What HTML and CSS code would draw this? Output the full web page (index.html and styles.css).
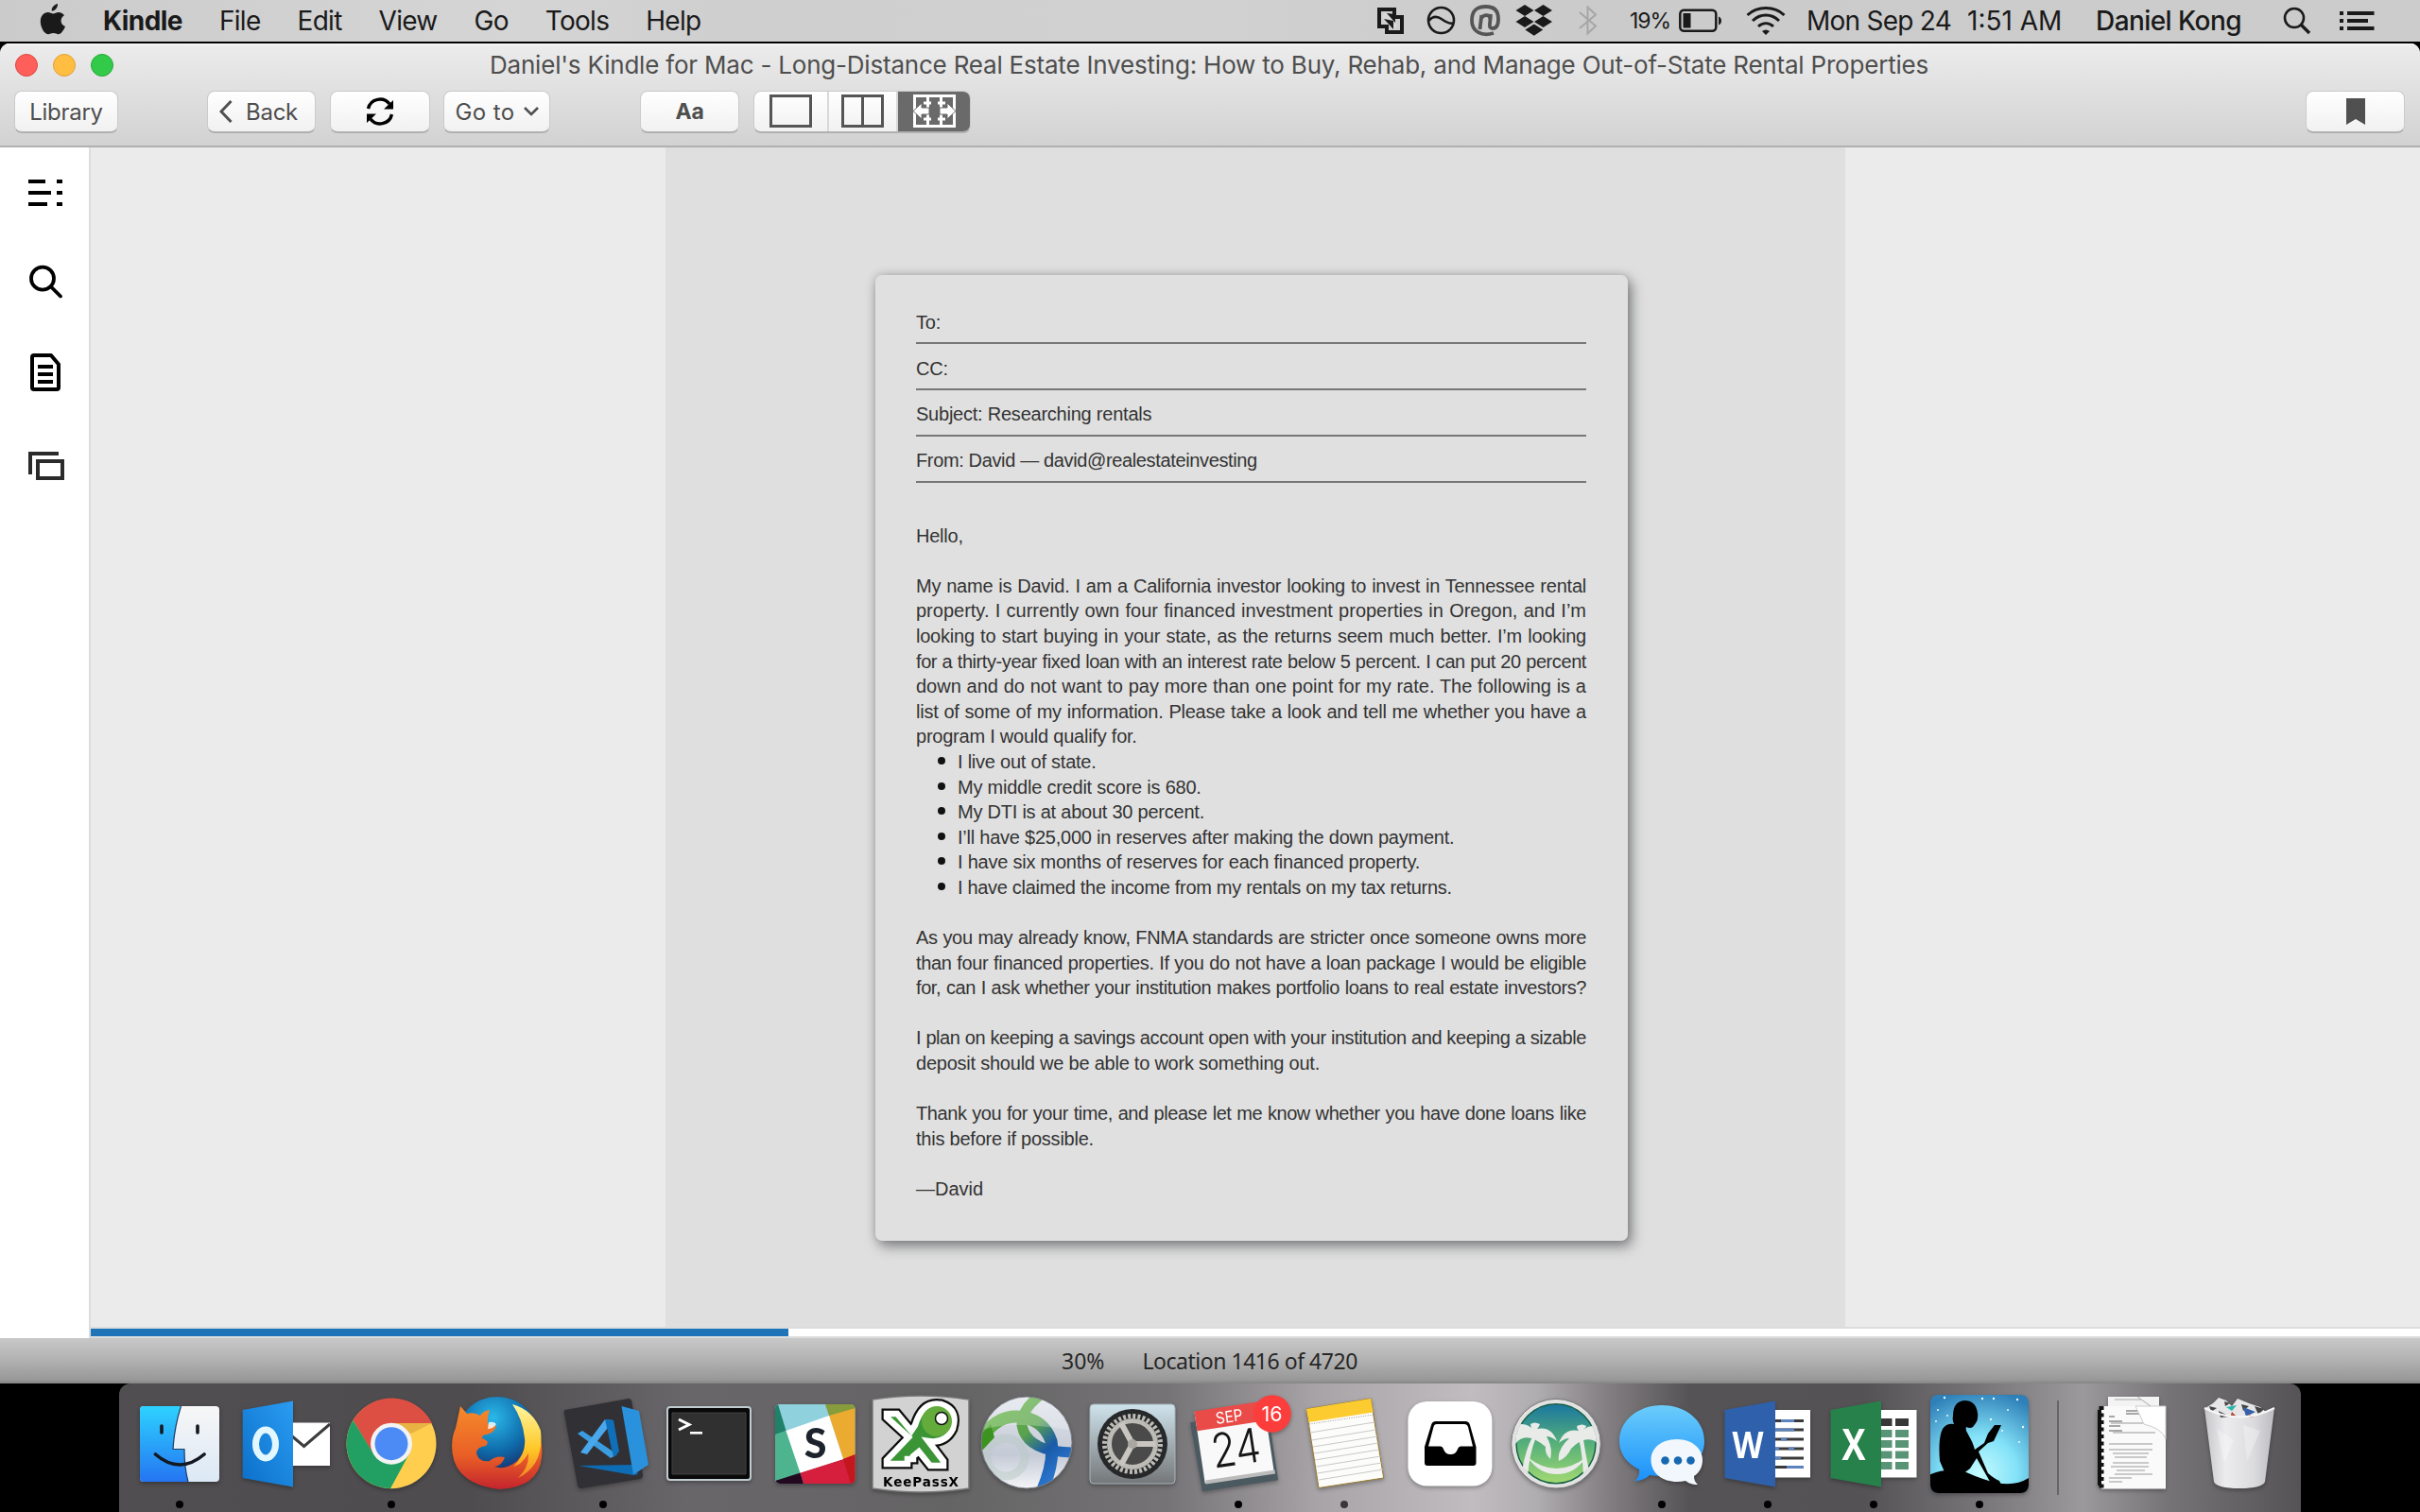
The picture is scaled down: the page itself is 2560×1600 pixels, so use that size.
FILE: index.html
```html
<!DOCTYPE html>
<html lang="en">
<head>
<meta charset="utf-8">
<title>Kindle</title>
<link rel="stylesheet" href="styles.css">
</head>
<body>
<header class="menubar">
  <svg class="apple" width="28" height="34" viewBox="0 0 28 34"><path d="M19 0c.4 3.600-2.600 7.600-6.300 7.600C12.200 4 15.600.500 19 0zM20 9c2.600 0 4.800 1.300 6 3.300-5 3-4.300 9.700 1 11.800-1.500 4-4.400 8.200-7.200 8.200-2 0-2.800-1.200-5.300-1.200s-3.500 1.200-5.300 1.200C5 32.300.800 25 .800 18.700.800 12.500 4.700 9 8.600 9c2.400 0 4.200 1.500 5.700 1.500S17.500 9 20 9z"/></svg>
  <nav class="menus">
    <b>Kindle</b><span>File</span><span>Edit</span><span>View</span><span>Go</span><span>Tools</span><span>Help</span>
  </nav>
  <div class="status">
    <svg class="s-tray" width="32" height="32" viewBox="0 0 32 32"><g fill="none" stroke="#1a1a1a" stroke-width="4"><path d="M20 12V4H4v18h8"/><path d="M12 20v8h16V12h-8"/></g><path d="M10 7l13 14-4 5L7 12z" fill="#d8d8d8"/><path d="M9 14l10 11v-9zM12 8l9 10V9z"/></svg>
    <svg class="s-circle" width="32" height="32" viewBox="0 0 32 32" fill="none" stroke="#1a1a1a" stroke-width="2.600"><circle cx="15.500" cy="15.500" r="13.500"/><path d="M2.500 16c4-5 9-5 14-1.500s8 5 12 4"/></svg>
    <svg class="s-at" width="32" height="34" viewBox="0 0 32 34" fill="none" stroke="#555" stroke-width="3.800"><path d="M25 30c-13 4-23-2-23-13S7 2 17 2s13 6 13 13c0 6-2 10-6 10s-3-3-3-5l1-10"/><path d="M10.500 26l1.800-15M12 14c3-4 9-4 9.500 1"/></svg>
    <svg class="s-drop" width="40" height="34" viewBox="0 0 40 34"><path d="M10 0l9.500 6L10 12 .500 6zM29.500 0L39 6l-9.500 6L20 6zM10 12l9.500 6-9.500 6-9.500-6zM29.500 12l9.500 6-9.500 6-9.500-6zM19.800 20.500l9.400 6-9.400 6.300-9.400-6.300z"/></svg>
    <svg class="s-bt" width="22" height="32" viewBox="0 0 22 32" fill="none" stroke="#a6a6a6" stroke-width="2"><path d="M2 7l17 14.500-8.500 8V1.500l8.500 8L2 24"/></svg>
    <span class="pct">19%</span>
    <svg class="s-bat" width="46" height="26" viewBox="0 0 46 26"><rect x="1.300" y="1.800" width="38" height="22" rx="4" fill="none" stroke="#1a1a1a" stroke-width="2.500"/><rect x="4.500" y="5" width="8" height="15.500"/><path d="M42 8.500c4 1 4 8 0 9z"/></svg>
    <svg class="s-wifi" width="42" height="30" viewBox="0 0 42 30" fill="none" stroke="#1a1a1a" stroke-width="3"><path d="M1.500 9C12-1 30-1 40.500 9M7 15c8-8 20-8 28 0M13 21c5-4.500 11-4.500 16 0"/><path d="M17 26q4-3 8 0l-4 4z" fill="#1a1a1a" stroke="none"/></svg>
    <span class="date">Mon Sep 24</span><span class="time">1:51 AM</span>
    <span class="user">Daniel Kong</span>
    <svg class="s-find" width="30" height="30" viewBox="0 0 30 30" fill="none" stroke="#1a1a1a" stroke-width="2.600"><circle cx="12" cy="12" r="10"/><path d="M19 19l9 9" stroke-width="3.400"/></svg>
    <svg class="s-list" width="37" height="20" viewBox="0 0 37 20"><path d="M0 0h4v4H0zM8 0h28.500v4H8zM0 8h4v4H0zM8 8h22v4H8zM0 16h4v4H0zM8 16h28.500v4H8z"/></svg>
  </div>
</header>

<main class="window">
  <header class="chrome">
    <div class="titlebar"><div class="lights"><i class="red"></i><i class="yellow"></i><i class="green"></i></div><h1>Daniel's Kindle for Mac - Long-Distance Real Estate Investing: How to Buy, Rehab, and Manage Out-of-State Rental Properties</h1></div>
    <div class="toolbar">
      <button class="btn library">Library</button>
      <button class="btn back"><svg width="14" height="24" viewBox="0 0 14 24" fill="none" stroke="#505050" stroke-width="3"><path d="M12.500 1L2 12l10.500 11"/></svg><span>Back</span></button>
      <button class="btn sync"><svg width="30" height="30" viewBox="0 0 30 30"><g fill="none" stroke="#000" stroke-width="3.400"><path d="M2.500 12C5 1 19-1 25 7M27.500 18C25 29 11 31 5 23"/></g><path d="M29 3v9.500H19zM1 27v-9.500h10z"/></svg></button>
      <button class="btn goto"><span>Go to</span><svg width="16" height="10" viewBox="0 0 16 10" fill="none" stroke="#505050" stroke-width="2.600"><path d="M1 1l7 7 7-7"/></svg></button>
      <button class="btn aa"><b>Aa</b></button>
      <div class="seg">
        <button class="one"><svg width="45" height="36" viewBox="0 0 45 36" fill="none" stroke="#555" stroke-width="3"><path d="M1.500 1.500h42v32h-42z"/></svg></button>
        <button class="two"><svg width="45" height="36" viewBox="0 0 45 36" fill="none" stroke="#555" stroke-width="3"><path d="M1.500 1.500h42v32h-42zM22.500 1.500v32"/></svg></button>
        <button class="three"><svg width="45" height="36" viewBox="0 0 45 36"><path d="M1.500 1.500h42v32h-42zM15.500 1.500v32M29.500 1.500v32M11 9h8M26 9h8M11 26h8M26 26h8" fill="none" stroke="#fff" stroke-width="3"/><path d="M0 17.500L9 9v5h8v7H9v5zM45 17.500L36 9v5h-8v7h8v5z" fill="#fff" stroke="#6a6a6a"/></svg></button>
      </div>
      <button class="btn mark"><svg width="20" height="28" viewBox="0 0 20 28"><path d="M0 0h20v28l-10-6-10 6z" fill="#505050"/></svg></button>
    </div>
  </header>

  <div class="body">
    <aside class="side">
      <svg width="40" height="28" viewBox="0 0 40 28"><path d="M0 0h18v4H0zM30 0h6v4h-6zM0 12h24v4H0zM30 12h6v4h-6zM0 24h20v4H0zM30 24h6v4h-6z"/></svg>
      <svg width="40" height="36" viewBox="0 0 40 36" fill="none" stroke="#000" stroke-width="3.800"><circle cx="15" cy="14.700" r="12"/><path d="M24 23.500l10 10" stroke-linecap="round"/></svg>
      <svg width="40" height="40" viewBox="0 0 40 40" fill="none" stroke="#000" stroke-width="4"><path d="M6 2h18l8 9.500V36q0 2-2 2H6q-2 0-2-2V4q0-2 2-2z" stroke-linejoin="round"/><path d="M10 14h16M10 22h16M10 30h16"/></svg>
      <svg width="40" height="30" viewBox="0 0 40 30" fill="none" stroke="#2b2b2b" stroke-width="4"><path d="M2 24V2h30M10 10h26v18H10z"/></svg>
    </aside>
    <section class="reader">
      <div class="spread"><div class="page"><article class="letter">
        <div class="row">To:</div>
        <div class="row">CC:</div>
        <div class="row">Subject: Researching rentals</div>
        <div class="row tight">From: David — david@realestateinvesting</div>
        <p class="hello">Hello,</p>
        <p class="full"><span>My name is David. I am a California investor looking to invest in Tennessee rental</span><span class="loose">property. I currently own four financed investment properties in Oregon, and I’m</span><span>looking to start buying in your state, as the returns seem much better. I’m looking</span><span class="tight">for a thirty-year fixed loan with an interest rate below 5 percent. I can put 20 percent</span><span class="loose">down and do not want to pay more than one point for my rate. The following is a</span><span>list of some of my information. Please take a look and tell me whether you have a</span></p>
        <p>program I would qualify for.</p>
        <ul>
          <li>I live out of state.</li>
          <li>My middle credit score is 680.</li>
          <li>My DTI is at about 30 percent.</li>
          <li>I’ll have $25,000 in reserves after making the down payment.</li>
          <li>I have six months of reserves for each financed property.</li>
          <li class="snug">I have claimed the income from my rentals on my tax returns.</li>
        </ul>
        <p class="full"><span class="snug">As you may already know, FNMA standards are stricter once someone owns more</span><span class="snug">than four financed properties. If you do not have a loan package I would be eligible</span><span class="tight">for, can I ask whether your institution makes portfolio loans to real estate investors?</span></p>
        <p class="full gap"><span class="tight">I plan on keeping a savings account open with your institution and keeping a sizable</span></p>
        <p>deposit should we be able to work something out.</p>
        <p class="full gap"><span class="tight">Thank you for your time, and please let me know whether you have done loans like</span></p>
        <p>this before if possible.</p>
        <p class="gap sign">—David</p>
      </article></div></div>
      <div class="progress"><div style="width:29.950%"></div></div>
    </section>
  </div>
  <footer class="foot"><span>30%</span><span class="loc">Location 1416 of 4720</span></footer>
</main>

<footer class="desktop"><div class="dock">
  <div class="app run"><svg viewBox="0 0 112 112"><defs><linearGradient id="fb" x2="0" y2="1"><stop stop-color="#2ed2ff"/><stop offset="1" stop-color="#2475f2"/></linearGradient><linearGradient id="fw" x2="0" y2="1"><stop stop-color="#f7f7f7"/><stop offset="1" stop-color="#dbe8f5"/></linearGradient></defs><rect x="14" y="16" width="84" height="80" rx="4" fill="url(#fw)"/><path d="M18 16h39.500C53 30 50 45 49 61.500h12c0 12 1 23 4 34.500H18q-4 0-4-4V20q0-4 4-4z" fill="url(#fb)"/><path d="M57.500 16C53 30 50 45 49 61.500h12c0 12 1 23 4 34.500" fill="none" stroke="#1c3e66" stroke-width="1.200"/><path d="M37 37v7M75 37v7M30.500 67q25.500 22 51.500 0" fill="none" stroke="#141820" stroke-width="3.600" stroke-linecap="round"/></svg></div>
  <div class="app"><svg viewBox="0 0 112 112"><defs><linearGradient id="ol" x1="0" y1="1" x2="1" y2="0"><stop stop-color="#0b6fc9"/><stop offset="1" stop-color="#2a9cf3"/></linearGradient></defs><path d="M62 33.500h41V79H62z" fill="#fff"/><path d="M62 47l13.600 11.500L103 35" fill="none" stroke="#3c3c3c" stroke-width="3"/><path d="M10.700 20L64 10.500v91L10.700 92z" fill="url(#ol)"/><ellipse cx="35" cy="56" rx="10.500" ry="15" fill="none" stroke="#e3f7ff" stroke-width="7"/></svg></div>
  <div class="app run"><svg viewBox="0 0 112 112"><circle cx="56" cy="55.700" r="47.500" fill="#ffce4f"/><path d="M15.500 31A47.500 47.500 0 0 1 99 34H56L37 67z" fill="#dd4f43"/><path d="M15.500 31A47.500 47.500 0 0 0 55 103.200l20-37-19-11-19 11z" fill="#22a063"/><path d="M56 34h43l-22 11z" fill="#d9a23a" opacity=".6"/><circle cx="56" cy="55.700" r="22" fill="#f3f3f3"/><circle cx="56" cy="55.700" r="17.500" fill="#4c8bf5"/></svg></div>
  <div class="app"><svg viewBox="0 0 112 112"><defs><radialGradient id="fx" cx=".45" cy=".25" r=".8"><stop stop-color="#2bb8ea"/><stop offset=".5" stop-color="#0f6cab"/><stop offset="1" stop-color="#1a1550"/></radialGradient><linearGradient id="fo" x2="0" y2="1"><stop stop-color="#f58a2a"/><stop offset=".6" stop-color="#e95e26"/><stop offset="1" stop-color="#c4242e"/></linearGradient><linearGradient id="fy" x2="0" y2="1"><stop stop-color="#fff6a0"/><stop offset=".6" stop-color="#ffc828"/><stop offset="1" stop-color="#f08522"/></linearGradient></defs><circle cx="56" cy="50" r="44" fill="url(#fx)"/><path d="M12 39l5-23 7 8q8-2 14 2 3-5 10-6-3 8-2 15 4 2 9 2-2 7-10 9-5 0-5 4 9 3 4 8-10 1-10 8 3 10 14 8 6-6 16-4-3 9-11 10 12 4 24-6 12-12 8-32 8 4 13 0 7 12 5 28-3 32-45 34Q8 98 8 58q0-10 4-19z" fill="url(#fo)"/><path d="M72 14q22 6 30 28 4 36-24 50 12-12 11-26-7 12-16 14 14-14 12-30-2-20-13-36z" fill="url(#fy)"/><path d="M47 33q6-1 8 2-3 5-9 5z" fill="#fff" opacity=".8"/></svg></div>
  <div class="app run"><svg viewBox="0 0 112 112"><path d="M15.600 20L83 8q3 0 3.500 4L98 89q0 3-3 4l-62 10q-3 0-4-3L15 24q-1-3 .6-4z" fill="#303035"/><path d="M30 79l58-1 5 10-5 1z" fill="#0e6cb4"/><path d="M75.500 16L94 21l10 57-16 10.500z" fill="#2a92dc"/><path d="M29 45l5-3 37 25-7 4z" fill="#3b9ce0"/><path d="M32 65l26-35 9 1-28 36z" fill="#49a8ec"/><path d="M58 30l9 1 6 33-6 6z" fill="#0f6fb8"/></svg></div>
  <div class="app"><svg viewBox="0 0 112 112"><rect x="12" y="17" width="88" height="77" rx="3" fill="#090909" stroke="#c0cdd0" stroke-width="2"/><path d="M17 23h78v65H17z" fill="#303030" stroke="#404040"/><path d="M24 30l11 5.500L24 41" fill="none" stroke="#fff" stroke-width="3"/><path d="M36 43h13v2.600H36z" fill="#fff"/></svg></div>
  <div class="app"><svg viewBox="0 0 112 112"><defs><clipPath id="sk"><rect x="14" y="14" width="84.500" height="84" rx="5"/></clipPath></defs><g clip-path="url(#sk)"><path d="M14 14h85v85H14z" fill="#8fd1dd"/><path d="M71 26l28-12v56l-13 2z" fill="#ebaa30"/><path d="M67 14h32v4L71 26z" fill="#879c3b"/><path d="M40.500 86.500L86 72l13-5v31H44z" fill="#d51f3d"/><path d="M86 72l13-5v31h-5z" fill="#c3161d"/><path d="M14 46l11.500-4L40.500 86.500 14 96z" fill="#4eb48f"/><path d="M14 14h3l8.500 28L14 46z" fill="#1f8168"/><path d="M14 95l26.500-8.500L44 98H14z" fill="#22091f"/><path d="M25.500 42L71 26l15 46-45.500 14.500z" fill="#fff"/></g><text x="56.500" y="71" text-anchor="middle" font-family="Lato" font-weight="900" font-size="43" fill="#1d232c">S</text></svg></div>
  <div class="app"><svg viewBox="0 0 112 112"><path d="M5 9q51-8 102 0v94q-51 8-102 0z" fill="#d2d2d2" stroke="#777" stroke-width="1.500"/><path d="M20 24h11l15 18L50 36q8-26 28-22 18 6 12 26-8 16-26 13l16 21v5H66l-12-15-6 5v3h-6v5H20v-4l23-24-23-21z" fill="#3b9436" stroke="#0c0c0c" stroke-width="11"/><path d="M20 24h11l15 18L50 36q8-26 28-22 18 6 12 26-8 16-26 13l16 21v5H66l-12-15-6 5v3h-6v5H20v-4l23-24-23-21z" fill="#3b9436" stroke="#fff" stroke-width="6.500"/><circle cx="73" cy="32" r="16" fill="#63ab3b"/><circle cx="78" cy="29" r="6.500" fill="#fff" stroke="#111" stroke-width="1.500"/><text x="56" y="100.500" text-anchor="middle" textLength="80" font-family="DejaVu Sans" font-weight="bold" font-size="13.500">KeePassX</text></svg></div>
  <div class="app"><svg viewBox="0 0 112 112"><defs><linearGradient id="sv" x2="0" y2="1"><stop stop-color="#e4e7ee"/><stop offset=".6" stop-color="#c4cad6"/><stop offset="1" stop-color="#fff"/></linearGradient><linearGradient id="sg" gradientUnits="userSpaceOnUse" x1="30" y1="20" x2="90" y2="90"><stop stop-color="#61b043"/><stop offset=".38" stop-color="#5aa24e"/><stop offset=".68" stop-color="#1a5aa8"/><stop offset="1" stop-color="#2a78d0"/></linearGradient><clipPath id="sc"><ellipse cx="56" cy="54.500" rx="48" ry="48.500"/></clipPath></defs><g clip-path="url(#sc)"><path d="M0 0h112v112H0z" fill="url(#sv)"/><circle cx="34" cy="70" r="20" fill="none" stroke="#b9c9c6" stroke-width="9" opacity=".5"/><path d="M2 60q18-34 44-33 28 2 36 26 4 24-12 58" fill="none" stroke="url(#sg)" stroke-width="13"/><path d="M76 0Q50 18 51 36q5 30 60 29" fill="none" stroke="url(#sg)" stroke-width="11"/><path d="M6 66V48l12-13 4 14z" fill="#3d9320"/><path d="M6 42Q40 30 106 42 100 0 56 4 20 6 6 42z" fill="#fff" opacity=".25"/></g><ellipse cx="56" cy="54.500" rx="48" ry="48.500" fill="none" stroke="#7a7e86"/></svg></div>
  <div class="app"><svg viewBox="0 0 112 112"><defs><linearGradient id="pf" x2="0" y2="1"><stop stop-color="#cfe3ec"/><stop offset="1" stop-color="#747779"/></linearGradient></defs><rect x="11" y="14" width="90" height="84" rx="4" fill="url(#pf)" stroke="#a7b6bc"/><circle cx="56" cy="56" r="37" fill="#26282a"/><circle cx="56" cy="56" r="29.500" fill="none" stroke="#bebcb7" stroke-width="5" stroke-dasharray="3 2.150"/><circle cx="56" cy="56" r="24.500" fill="#4a4a4a" stroke="#bdbbb6" stroke-width="5"/><path d="M56 56h24M56 56L44 34M56 56L44 78" stroke="#c9c6c1" stroke-width="6"/><circle cx="56" cy="56" r="5" fill="#a9a7a2"/></svg></div>
  <div class="app run"><svg viewBox="0 0 112 112"><g transform="rotate(-8.500 56 56)"><path d="M9 26h83v74H11z" fill="#4b5961"/><path d="M15 16h74v76H15z" fill="#f9f9f9"/><path d="M16 89h74v4H16z" fill="#bbb"/><path d="M15 15h74v21H15z" fill="#e94b48"/></g><text x="47" y="33" text-anchor="middle" transform="rotate(-8 47 33)" font-family="Inter" font-size="17" fill="#fff" textLength="29" lengthAdjust="spacingAndGlyphs">SEP</text><text x="56" y="78" text-anchor="middle" transform="rotate(-8.500 56 78)" font-family="Inter" font-weight="300" font-size="50" fill="#161616" textLength="52" lengthAdjust="spacingAndGlyphs">24</text><circle cx="92" cy="24" r="19.800" fill="#fb3d3c"/><text x="91.500" y="32" text-anchor="middle" font-family="Inter" font-size="22" fill="#fff" textLength="22" lengthAdjust="spacingAndGlyphs">16</text></svg></div>
  <div class="app run dim"><svg viewBox="0 0 112 112"><path d="M16 19L84 8l13.700 84L29 102.500z" fill="#fcfcfa" stroke="#9a7a28"/><path d="M16 19L84 8l2.600 14.500-68 10.500z" fill="#fccb30"/><path d="M19 35l68-10" stroke="#999" stroke-dasharray="1 1.500"/><path d="M20 44l68-11M21.500 52l68-11M23 59l68-11M24 66l68-11M25 73l68-11M26.500 80l68-11M27.500 87l68-11M29 94l68-11" stroke="#c9c9c9"/></svg></div>
  <div class="app"><svg viewBox="0 0 112 112"><rect x="11.400" y="11" width="89" height="89.500" rx="20" fill="#fff"/><path d="M41 32h31q4 0 5 4l6.500 23v17q0 3-3 3H32q-3 0-3-3V59l7-23q1-4 5-4z"/><path d="M42 35h29q3 0 4 3l5 20.500H67.500q-2.500 0-3.500 3-2 5.500-7.500 5.500T49 61.500q-1-3-3.500-3H33L38.500 38q.500-3 3.500-3z" fill="#fff"/></svg></div>
  <div class="app"><svg viewBox="0 0 112 112"><defs><linearGradient id="pl" x2="0" y2="1"><stop stop-color="#1673a2"/><stop offset=".5" stop-color="#56b079"/><stop offset="1" stop-color="#a7dc72"/></linearGradient><clipPath id="pc"><circle cx="56" cy="55.700" r="43"/></clipPath></defs><circle cx="56" cy="55.700" r="44.500" fill="url(#pl)" stroke="#e2e2e2" stroke-width="5.500"/><circle cx="56" cy="55.700" r="47.300" fill="none" stroke="#777"/><circle cx="56" cy="55.700" r="42" fill="none" stroke="#145e45" stroke-width="1.500"/><g fill="#e9ebe8" clip-path="url(#pc)"><path d="M31 49h4q-7 16-9 42l-6-6q4-24 11-36z"/><path d="M33 51q-13-5-20 5-3-9 2-16-4-1-5-3 12-5 20 2-1-3-1-4 4-3 10 0-1 3-3 5 15-3 21 13-6-5-11-5 7 12 4 24-6-6-5-13-6-5-12-8z"/><path d="M80 51h5q2 14 6 33l-6 7q-1-26-5-40z"/><path d="M82 53q13-5 20 5 3-9-2-16 4-1 5-3-12-5-20 2 3-3 3-4-4-3-10 0 0 3 2 5-15-3-21 13 6-5 11-5-13 12-11 24 9-4 13-13 5-5 10-8z"/><path d="M26 70q30 24 62 0-12 18-31 18T26 70z"/></g></svg></div>
  <div class="app run"><svg viewBox="0 0 112 112"><defs><linearGradient id="ms" x2="0" y2="1"><stop stop-color="#6bcdfb"/><stop offset="1" stop-color="#1b91fb"/></linearGradient></defs><path d="M56 15c25 0 45 16 45 38S81 90 56 90q-7 0-13-1-6 6-16 6 6-4 5-12C19 77 11 66 11 53c0-22 20-38 45-38z" fill="url(#ms)"/><path d="M72 51c15 0 27 9 27 22 0 7-3 13-9 17 0 4 1 6 4 9-7 0-10-2-13-4q-4 1-9 1c-15 0-27.500-9-27.500-23S57 51 72 51z" fill="#f1f7fd"/><g fill="#1668b0"><circle cx="59.500" cy="73.500" r="4.300"/><circle cx="73" cy="73.500" r="4.300"/><circle cx="86.500" cy="73.500" r="4.300"/></g></svg></div>
  <div class="app run"><svg viewBox="0 0 112 112"><path d="M62 20h39v71.500H62z" fill="#fff"/><path d="M64 31.500h30M64 41h30M64 51h30M64 61h30M64 71h30M64 80.500h30" stroke="#3a3a3a" stroke-width="3.200"/><path d="M70 31.500h14M64 41h20M70 51h6M64 61h4M78 61h6M64 71h6M76 80.500h18" stroke="#5c83bd" stroke-width="3.200"/><path d="M10.500 20L64 10.500v91L10.500 92z" fill="#2f60ab"/><text x="35" y="71" text-anchor="middle" font-family="Open Sans" font-weight="bold" font-size="40" fill="#fff" textLength="33" lengthAdjust="spacingAndGlyphs">W</text></svg></div>
  <div class="app run"><svg viewBox="0 0 112 112"><path d="M62 20h39.500v71.500H62z" fill="#fff"/><path d="M64 29h11.500v8H64zM79 29h14v8H79z" fill="#383838"/><path d="M64 41h11.500v8H64zM79 41h14v8H79zM64 52h11.500v8H64zM79 52h14v8H79zM64 63.500h11.500v8H64zM79 63.500h14v8H79zM64 75h11.500v8H64zM79 75h14v8H79z" fill="#5a9477"/><path d="M10.500 20L64 10.500v91L10.500 92z" fill="#26824a"/><text x="35" y="73" text-anchor="middle" font-family="Open Sans" font-weight="bold" font-size="46" fill="#fff" textLength="25" lengthAdjust="spacingAndGlyphs">X</text></svg></div>
  <div class="app run"><svg viewBox="0 0 112 112"><defs><radialGradient id="kn" cx=".5" cy=".8" r=".85"><stop stop-color="#c4fbff"/><stop offset=".45" stop-color="#83e2f8"/><stop offset="1" stop-color="#2f80b8"/></radialGradient><clipPath id="kc"><rect x="4" y="4" width="104" height="104" rx="8"/></clipPath></defs><g clip-path="url(#kc)"><path d="M4 4h104v104H4z" fill="url(#kn)"/><g fill="#e8fbff"><circle cx="19" cy="7" r="1.200"/><circle cx="59" cy="8" r="1.200"/><circle cx="71" cy="8" r="1.200"/><circle cx="96" cy="9" r="1.200"/><circle cx="12" cy="20" r="1"/><circle cx="10" cy="32" r="1"/><circle cx="68" cy="30" r="1.200"/><circle cx="86" cy="20" r="1"/><circle cx="102" cy="38" r="1.200"/><circle cx="98" cy="54" r="1"/><circle cx="22" cy="26" r="1"/><circle cx="80" cy="42" r="1"/></g><path d="M0 90q20-10 42-4 18 8 32 11 20 4 34-5v20H0z"/><path d="M28 26q0-15 12-16 12 0 14 13 1 7-2 11l-3 4q-3 2-7 0-1 3 1 6 6 10 8 18l10-7 4-10 7-9h7l-8 17-6 2-10 9 10 23q7 6 12 8l3 6H70L53 71 46 82l-8 6H20l-6-14q-2-24 3-34 4-6 12-5-2-4-1-9z"/></g></svg></div>
  <i class="divider"></i>
  <div class="app docs"><svg viewBox="0 0 112 112"><path d="M31 6h54v30H31z" fill="#f3f3f3"/><path d="M20 20h8v80h-8z" fill="#111"/><path d="M24 16h68v87.500H24z" fill="#fafafa"/><path d="M24 16v88" stroke="#111" stroke-width="5" stroke-dasharray="4 3.500"/><path d="M50 21h18M50 24h18M32 27h6M32 32h14M32 37h12M32 42h14" stroke="#555"/><path d="M34 34h34M36 44h45M32 56h46M32 62h46M36 66h38M38 70h34M36 76h38M34 80h40M40 84h30M38 88h40M32 92h24M32 96h14" stroke="#999"/><path d="M60 16l9 19q20 5 23 16V16z" fill="#fff" stroke="#ccc"/><path d="M62 6l14 10M38 9h28" stroke="#aaa"/></svg></div>
  <div class="app trash"><svg viewBox="0 0 112 112"><defs><linearGradient id="tr" x2="1"><stop stop-color="#c6c6ca"/><stop offset=".3" stop-color="#ececee"/><stop offset=".7" stop-color="#dcdcdf"/><stop offset="1" stop-color="#bcbcc0"/></linearGradient></defs><path d="M20 18l8-5 6-6 8 3 6 6 6-8 12 5 12 4 7 6-8 7H28z" fill="#e6e6e8"/><path d="M19 18q37 19 74 0l-10 78q-3 7-27 7t-27-7z" fill="url(#tr)"/><path d="M24 16l8 2-6 4zM34 21l12 6-10 1zM58 14l8 2-6 5zM72 16l10 3-6 6zM40 11l6 2-5 3z" fill="#444"/><path d="M42 17l11-2-5 6z" fill="#27b8a8"/><path d="M60 17l13 5-10 5z" fill="#3461a8"/><path d="M48 22l6 6h-8zM66 24l6 3-7 1z" fill="#b04a35"/><path d="M19 18q37 19 74 0" fill="none" stroke="#f6f6f6" stroke-width="2"/><path d="M32 40l18 12-10 24zM60 36l18 6-14 32z" fill="#fff" opacity=".3"/></svg></div>
</div></footer>
</body>
</html>
```
FILE: styles.css
```css
* { box-sizing: border-box; }
body { margin: 0; width: 2560px; height: 1600px; overflow: hidden; display: flex; flex-direction: column; background: #000; font-family: Inter, "Liberation Sans", sans-serif; }
svg { display: block; flex: none; }
button { border: 0; padding: 0; font: inherit; letter-spacing: inherit; color: inherit; }

.menubar { height: 44px; flex: none; display: flex; align-items: center; background: linear-gradient(90deg, #cbcbcb, #d0d0d0 10%, #d5d5d5 21%, #cfcfcf 30%, #d1d1d1 50%, #cbcbcb 65%, #ccc); margin-bottom: 2px; color: #1a1a1a; fill: #1a1a1a; font-size: 28px; line-height: 44px; white-space: nowrap; }
.apple { margin: -3px 0 0 42px; }
.menus { display: flex; gap: 39px; margin-left: 39px; width: 1346px; letter-spacing: -.720px; }
.menus b { letter-spacing: -.550px; }
.status { display: flex; align-items: center; }
.s-circle { margin-left: 22px; }
.s-at { margin-left: 14px; }
.s-drop { margin-left: 16px; }
.s-bt { margin-left: 26px; }
.pct { margin-left: 33px; width: 43px; font-size: 23px; letter-spacing: -1.050px; }
.s-bat { margin-left: 9px; }
.s-wifi { margin-left: 25px; }
.date { margin-left: 22px; width: 170px; letter-spacing: -.750px; }
.time { width: 100px; }
.user { margin-left: 36px; width: 155px; font-weight: 500; letter-spacing: -.570px; }
.s-find { margin-left: 43px; }
.s-list { margin-left: 30px; }

.window { height: 1418px; flex: none; display: flex; flex-direction: column; border-radius: 10px 10px 0 0; overflow: hidden; background: #ebebeb; }
.chrome { height: 110px; flex: none; background: linear-gradient(#ececec, #d2d2d2); border-bottom: 2px solid #b0b0b0; box-shadow: inset 0 2px #f5f5f5; color: #4e4e4e; }
.titlebar { height: 50px; display: flex; align-items: center; padding: 0 0 5px 16px; }
.lights { display: flex; gap: 16px; width: 502px; }
.lights i { width: 24px; height: 24px; border-radius: 50%; border: 1px solid #e0443e; background: #ff5f5b; }
.lights .yellow { background: #ffbe41; border-color: #dfa035; }
.lights .green { background: #33ca4a; border-color: #27a938; }
h1 { margin: 0; font-size: 26px; font-weight: 400; line-height: 44px; letter-spacing: -.205px; white-space: nowrap; }
.toolbar { display: flex; padding-left: 15px; font-size: 24px; letter-spacing: -.300px; }
.btn { height: 45px; display: flex; align-items: center; justify-content: center; border-radius: 8px; background: linear-gradient(#fff, #f1f1f1); border: 1px solid #cbcbcb; border-bottom: 2px solid #b0b0b0; white-space: nowrap; }
.library { width: 110px; }
.back { width: 115px; margin-left: 94px; gap: 14px; padding-right: 6px; }
.sync { width: 106px; margin-left: 15px; }
.goto { width: 113px; margin-left: 14px; gap: 9px; letter-spacing: .400px; }
.aa { width: 105px; margin-left: 95px; font-size: 23px; }
.seg { width: 230px; margin-left: 15px; display: flex; height: 45px; border-radius: 8px; overflow: hidden; border: 1px solid #cbcbcb; border-bottom: 2px solid #b0b0b0; background: linear-gradient(#fff, #f1f1f1); }
.seg button { background: none; display: flex; align-items: center; justify-content: center; border-right: 2px solid #d8d8d8; }
.one { width: 79px; }
.two { width: 73px; }
.seg .three { flex: 1; background: #6a6a6a; border: 0; }
.mark { width: 105px; margin-left: 1412px; }

.body { flex: 1; display: flex; min-height: 0; }
.side { width: 96px; background: #fff; border-right: 2px solid #ddd; padding: 34px 0 0 30px; }
.side svg { margin-bottom: 62px; }
.side svg:nth-child(2) { margin-bottom: 58px; }
.side svg:nth-child(3) { margin-bottom: 64px; }
.reader { flex: 1; display: flex; flex-direction: column; }
.spread { flex: 1; padding-left: 608px; }
.page { width: 1248px; height: 1248px; background: #dfdfdf; padding: 135px 0 0 222px; }
.letter { width: 796px; height: 1022px; border-radius: 7px; background: #e0e0e0; box-shadow: 4px 6px 14px rgba(70,72,76,.6), 0 0 8px rgba(90,90,90,.3); padding: 24.400px 44px 0 43px; font: 20px/26.600px "Liberation Sans", sans-serif; letter-spacing: -.230px; color: #333; white-space: nowrap; }
.row { height: 48.800px; padding-top: 12.400px; border-bottom: 2px solid #777; }
.letter p { margin: 0; }
.letter .hello { margin: 43px 0 26.600px; }
.full { text-align: justify; text-align-last: justify; white-space: normal; }
.full span { display: block; }
.loose { letter-spacing: 0; }
.snug { letter-spacing: -.310px; }
.row.tight { letter-spacing: -.360px; }
.full .tight { letter-spacing: -.420px; }
.letter ul { margin: 0 0 26.600px; padding: 0; list-style: none; }
.letter li { padding-left: 44px; position: relative; }
.letter li::before { content: ""; position: absolute; left: 23px; top: 8px; width: 8px; height: 8px; border-radius: 50%; background: #111; }
.letter .gap { margin-top: 26.600px; }
.sign { letter-spacing: 0; }
.progress { height: 12px; border: solid #dcdcdc; border-width: 2px 0; background: #fff; }
.progress div { height: 8px; background: #1e74b7; }
.foot { height: 48px; flex: none; display: flex; align-items: center; gap: 40px; padding-left: 1123px; background: linear-gradient(#c8c8c8, #b3b3b3 45%, #989898 92%, #858585); font: 23px "Noto Sans", sans-serif; color: #262626; }
.loc { letter-spacing: -.470px; }

.desktop { height: 136px; flex: none; padding-left: 126px; }
.dock { width: 2308px; height: 136px; display: flex; padding: 8px 0 0 8px; border-radius: 12px 12px 0 0; background: linear-gradient(90deg, #504e50, #4e4c4e 16%, #696669 26%, #656465 38%, #757375 48%, #a8a4a8 55%, #c0bcc0 62%, #b0adb0 65%, #858184 68%, #555355 72%, #545254 80%, #767376 85%, #9c999c 90%, #767376 94%, #555355 100%); }
.app { width: 112px; height: 128px; display: flex; flex-direction: column; align-items: center; }
.app svg { width: 112px; height: 112px; filter: drop-shadow(0 2px 2px rgba(0,0,0,.3)); }
.app.run::after { content: ""; width: 8px; height: 8px; margin-top: 4px; border-radius: 50%; background: #000; }
.app.dim::after { background: #39373a; }
.divider { width: 2px; height: 100px; margin: 10px 21px 0 26px; background: #666466; }
.trash { margin-left: 2px; }
```
